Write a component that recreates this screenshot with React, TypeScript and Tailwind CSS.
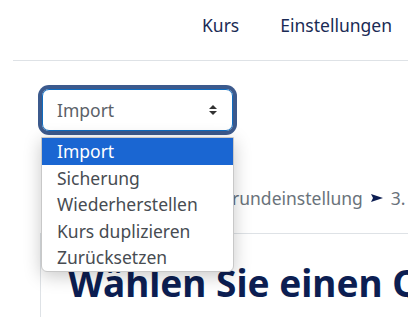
import React from "react";

export default function App() {
  const items = ["Import", "Sicherung", "Wiederherstellen", "Kurs duplizieren", "Zurücksetzen"];
  const Arrow = () => (
    <svg width="12" height="8" viewBox="0 0 12 8" className="mx-[8px] shrink-0">
      <path d="M0 0 L12 4 L0 8 L2 4 Z" fill="#0c1e52" />
    </svg>
  );
  return (
    <div
      className="relative w-[408px] h-[317px] overflow-hidden bg-white"
      style={{ fontFamily: '"Noto Sans", "Open Sans", sans-serif' }}
    >
      <div className="ml-[13px] h-[61px] border-b border-[#dee2e6] flex items-center justify-end pr-[16px] pb-[10px]">
        <nav className="flex items-center gap-[41px] text-[17.5px] text-[#1a2b55]">
          <span>Kurs</span>
          <span>Einstellungen</span>
        </nav>
      </div>

      <div className="pl-[42px] pt-[28px]">
        <div className="w-[191px] h-[42px] rounded-[7px] border border-[#0f6cbf] shadow-[0_0_0_4px_#3c5a8d] flex items-center justify-between pl-[14px] pr-[14px] text-[17.5px] text-[#5b6168]">
          <span>Import</span>
          <svg width="10" height="14" viewBox="0 0 10 14">
            <path d="M1 6 L5 2 L9 6 Z" fill="#333" />
            <path d="M1 8 L5 12 L9 8 Z" fill="#333" />
          </svg>
        </div>
      </div>

      <div className="mt-[57px] pl-[154px] whitespace-nowrap text-[17.5px] text-[#6a737b] leading-[20px] flex items-center">
        <span className="shrink-0">Kurs</span>
        <Arrow />
        <span className="shrink-0">Grundeinstellung</span>
        <Arrow />
        <span className="shrink-0">3. Abschnitt</span>
      </div>

      <div className="mt-[25px] ml-[40px] border-t border-[#dee2e6]">
        <div className="border-l border-[#dee2e6] pl-[27px] pt-[27px] h-[100px]">
          <h1 className="whitespace-nowrap text-[37px] font-bold text-[#0c1e52] leading-[44px]">
            Wählen Sie einen Quiztyp
          </h1>
        </div>
      </div>

      <div className="absolute left-[41px] top-[137px] w-[193px] bg-white border border-[#c8c8c8] rounded-b-[6px] shadow-[0_4px_18px_rgba(0,0,0,0.22)] overflow-hidden text-[17.5px] text-[#474c52]">
        {items.map((it, i) => (
          <div
            key={it}
            className={
              i === 0
                ? "h-[26.5px] leading-[26px] pl-[15px] bg-[#1a66d2] text-white"
                : "h-[26.5px] leading-[26px] pl-[15px]"
            }
          >
            {it}
          </div>
        ))}
      </div>
    </div>
  );
}
